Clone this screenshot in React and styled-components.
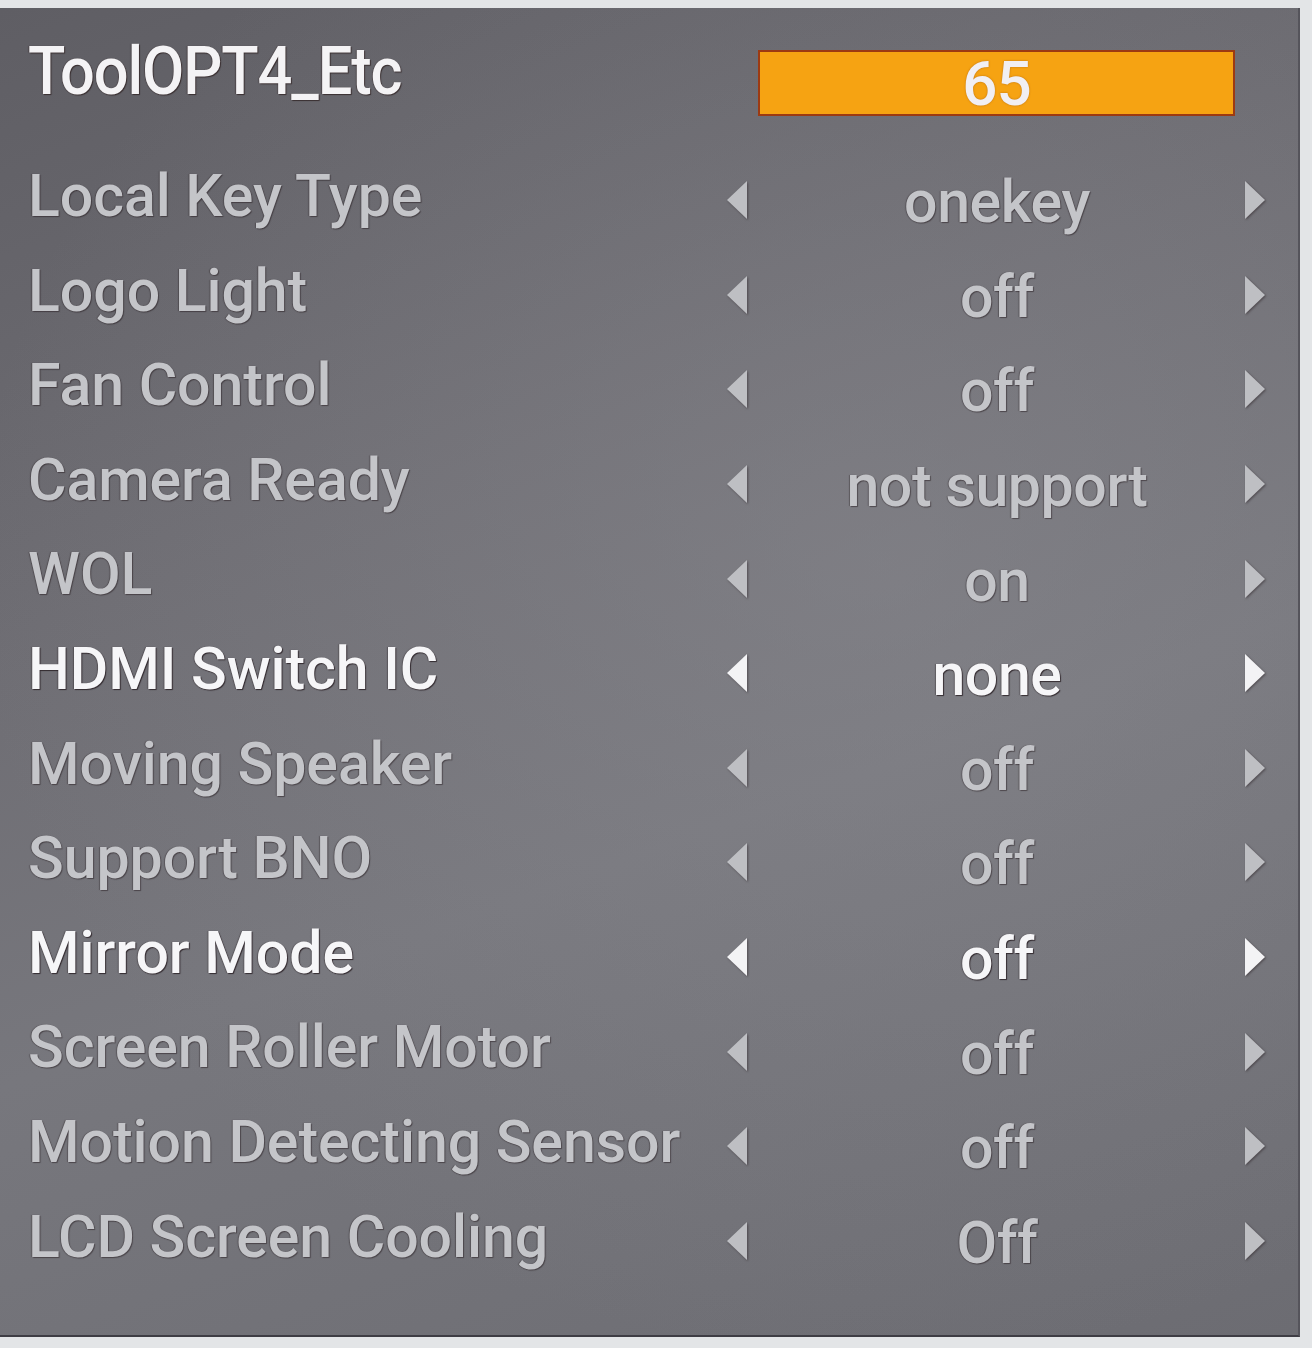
import React from 'react';
import styled, { createGlobalStyle } from 'styled-components';

const items = [
    { label: 'Local Key Type', value: 'onekey' },
    { label: 'Logo Light', value: 'off' },
    { label: 'Fan Control', value: 'off' },
    { label: 'Camera Ready', value: 'not support' },
    { label: 'WOL', value: 'on' },
    { label: 'HDMI Switch IC', value: 'none', active: true },
    { label: 'Moving Speaker', value: 'off' },
    { label: 'Support BNO', value: 'off' },
    { label: 'Mirror Mode', value: 'off', active: true },
    { label: 'Screen Roller Motor', value: 'off' },
    { label: 'Motion Detecting Sensor', value: 'off' },
    { label: 'LCD Screen Cooling', value: 'Off' },
];

const Arrow = ({ dir, active }) => (
    <ArrowBox $active={active}>
        <svg width="22" height="40" viewBox="0 0 22 40">
            {dir === 'left'
                ? <polygon points="21,1 21,39 1,20" />
                : <polygon points="1,1 1,39 21,20" />}
        </svg>
    </ArrowBox>
);

const App = () => {
    return (
        <>
            <GlobalStyle />
            <Panel>
                <TitleRow>
                    <Title>ToolOPT4_Etc</Title>
                    <ValueBox>65</ValueBox>
                </TitleRow>
                <List>
                    {items.map(item => (
                        <Row key={item.label}>
                            <Label $active={item.active}>{item.label}</Label>
                            <Arrow dir="left" active={item.active} />
                            <Value $active={item.active}>{item.value}</Value>
                            <Arrow dir="right" active={item.active} />
                        </Row>
                    ))}
                </List>
            </Panel>
        </>
    );
};

export default App;

const GlobalStyle = createGlobalStyle`
    html, body {
        margin: 0;
        padding: 0;
        background: #e3e5e7;
    }
    body {
        font-family: Roboto, 'Liberation Sans', sans-serif;
    }
`;

const Panel = styled.div`
    width: 1300px;
    height: 1329px;
    margin-top: 8px;
    box-sizing: border-box;
    padding-left: 28px;
    background:
        radial-gradient(ellipse 70% 60% at 68% 42%, rgba(140, 140, 146, 0.45) 0%, rgba(140, 140, 146, 0) 100%),
        linear-gradient(160deg, #5f5e64 0%, #6e6d73 35%, #77777d 60%, #6c6c72 100%);
    border-bottom: 2px solid #3e3d44;
    border-right: 2px solid #55545b;
`;

const TitleRow = styled.div`
    height: 141px;
    display: flex;
    align-items: flex-start;
`;

const Title = styled.div`
    width: 730px;
    margin-top: 31px;
    font-size: 66px;
    font-weight: 500;
    line-height: 66px;
    letter-spacing: -1.2px;
    color: #f4f3f5;
    transform: scaleX(0.93);
    transform-origin: left center;
    text-shadow: 1px 1px 1px rgba(40, 25, 25, 0.7), -1px 0 1px rgba(40, 25, 25, 0.4);
`;

const ValueBox = styled.div`
    width: 477px;
    height: 66px;
    margin-top: 42px;
    box-sizing: border-box;
    background: #f6a312;
    border: 2px solid #9c3a12;
    display: flex;
    align-items: center;
    justify-content: center;
    font-size: 62px;
    font-weight: 500;
    color: #f1eff2;
    letter-spacing: -1px;
    text-shadow: 0 0 2px rgba(140, 70, 20, 0.6);
`;

const List = styled.div`
    display: grid;
    grid-auto-rows: 94.6px;
`;

const Row = styled.div`
    display: grid;
    grid-template-columns: 698px 24px 494px 24px;
    align-items: center;
`;

const Label = styled.div`
    font-size: 59px;
    font-weight: 500;
    line-height: 94.6px;
    white-space: nowrap;
    letter-spacing: -0.05px;
    color: ${p => (p.$active ? '#f6f6f8' : '#c4c5c9')};
    text-shadow: 1px 1px 1px rgba(35, 25, 30, ${p => (p.$active ? 0.8 : 0.5)}), -1px 0 1px rgba(35, 25, 30, 0.35);
`;

const Value = styled(Label)`
    text-align: center;
    padding-top: 12px;
    line-height: 82px;
    letter-spacing: -0.4px;
`;

const ArrowBox = styled.div`
    display: flex;
    align-items: center;
    padding-top: 8px;
    svg {
        fill: ${p => (p.$active ? '#f3f3f5' : '#bebfc3')};
        filter: drop-shadow(1px 1px 1px rgba(35, 25, 30, 0.5));
    }
`;
